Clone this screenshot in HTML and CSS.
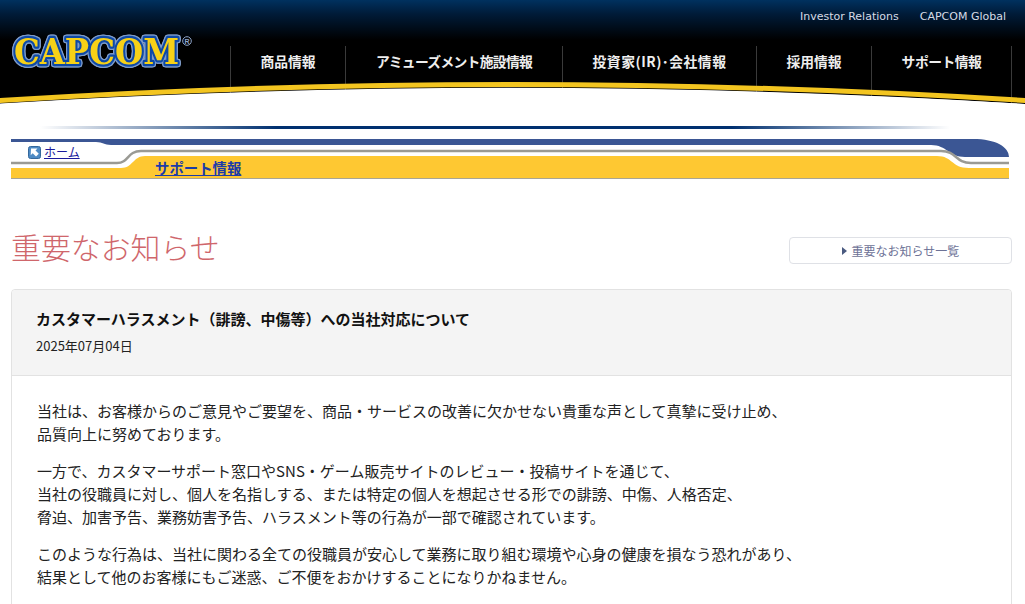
FILE: index.html
```html
<!DOCTYPE html>
<html lang="ja">
<head>
<meta charset="utf-8">
<title>重要なお知らせ | CAPCOM</title>
<link rel="stylesheet" href="styles.css">
</head>
<body>
<header class="site-header">
  <ul class="util-nav">
    <li><a href="#">Investor Relations</a></li>
    <li><a href="#">CAPCOM Global</a></li>
  </ul>
  <div class="main-row">
    <a class="logo" href="#" aria-label="CAPCOM">
      <svg width="190" height="50" viewBox="0 0 190 50">
        <text class="logo-text" x="8" y="36" textLength="165" lengthAdjust="spacingAndGlyphs">CAPCOM</text>
        <circle class="logo-reg-ring" cx="181" cy="13" r="4.300"/>
        <text class="logo-reg" x="181" y="15.500">R</text>
      </svg>
    </a>
    <nav class="main-nav">
      <a href="#">商品情報</a>
      <a class="amuse" href="#">アミューズメント施設情報</a>
      <a class="ir" href="#">投資家(IR)･会社情報</a>
      <a href="#">採用情報</a>
      <a class="last" href="#">サポート情報</a>
    </nav>
  </div>
  <svg class="swoosh" width="1025" height="30" viewBox="0 0 1025 30" aria-hidden="true">
    <path class="sw-shadow" d="M0 24 Q510 -7 1025 24 V30 H0Z"/>
    <path class="sw-white" d="M0 23.500 Q510 -8 1025 24 V30 H0 Z"/>
    <path class="sw-yellow" d="M0 18 Q510 -14 1025 18 V23 Q510 -9 0 23Z"/>
  </svg>
</header>

<div class="rule"></div>

<div class="band">
  <svg class="band-art" width="998" height="41" viewBox="0 0 998 41" aria-hidden="true">
    <path class="b-blue" d="M0 0 H962 C985 0 998 8 998 18 H954 C938 18 936 6 920 6 H100 C93 6 92 3 85 3 H0Z"/>
    <path class="b-yellow" d="M0 29 H110 C122 29 122 17 134 17 H926 C942 17 940 29 958 29 H998 V39 H0Z"/>
    <path class="b-gray" d="M0 24 H106 C118 24 116 12 130 12 H930 C946 12 944 24 960 24 H998" />
    <path class="b-base" d="M0 39.500 H998"/>
  </svg>
  <div class="band-home">
    <svg width="13" height="13" viewBox="0 0 13 13" aria-hidden="true">
      <rect class="home-box" x="0.500" y="0.500" width="12" height="12" rx="2"/>
      <path class="home-arrow" d="M3 2.500 H9.500 L7.500 4.500 L10.800 7.800 L8 10.600 L4.700 7.300 L2.700 9.300Z"/>
    </svg>
    <a href="#">ホーム</a>
  </div>
  <a class="band-title" href="#">サポート情報</a>
</div>

<main class="content">
  <div class="page-head">
    <h1>重要なお知らせ</h1>
    <a class="list-btn" href="#"><span class="tri"></span>重要なお知らせ一覧</a>
  </div>
  <article class="card">
    <div class="card-head">
      <h2>カスタマーハラスメント（誹謗、中傷等）への当社対応について</h2>
      <p class="date">2025年07月04日</p>
    </div>
    <div class="card-body">
      <p>当社は、お客様からのご意見やご要望を、商品・サービスの改善に欠かせない貴重な声として真摯に受け止め、<br>品質向上に努めております。</p>
      <p>一方で、カスタマーサポート窓口やSNS・ゲーム販売サイトのレビュー・投稿サイトを通じて、<br>当社の役職員に対し、個人を名指しする、または特定の個人を想起させる形での誹謗、中傷、人格否定、<br>脅迫、加害予告、業務妨害予告、ハラスメント等の行為が一部で確認されています。</p>
      <p>このような行為は、当社に関わる全ての役職員が安心して業務に取り組む環境や心身の健康を損なう恐れがあり、<br>結果として他のお客様にもご迷惑、ご不便をおかけすることになりかねません。</p>
    </div>
  </article>
</main>
</body>
</html>
```
FILE: styles.css
```css
* { box-sizing: border-box; }
html, body { margin: 0; padding: 0; background: #fff; overflow: hidden; height: 604px; }
body { font-family: "Noto Sans CJK JP", "Noto Sans", sans-serif; color: #222; width: 1025px; }
a { color: inherit; text-decoration: none; }
ul { list-style: none; margin: 0; padding: 0; }

.site-header {
  position: relative;
  height: 110px;
  background: linear-gradient(#00315f 0, #001b38 14px, #000 40px);
  display: flex;
  flex-direction: column;
}
.util-nav {
  display: flex;
  justify-content: flex-end;
  gap: 21px;
  padding: 9px 19px 0 0;
  height: 46px;
  font: 11px/15px "DejaVu Sans", sans-serif;
  color: #d5dbe6;
}
.main-row { display: flex; justify-content: space-between; flex: 1; }
.logo { margin: -18px 0 0 6px; height: 50px; }
.logo svg { display: block; }
.logo-text {
  font: 700 35px "DejaVu Serif", serif;
  fill: #f7d117;
  stroke: #0e49a6;
  stroke-width: 4.5px;
  stroke-linejoin: round;
  paint-order: stroke;
  filter: drop-shadow(1px 0 0 #7f9cc9) drop-shadow(-1px 0 0 #7f9cc9) drop-shadow(0 1px 0 #7f9cc9) drop-shadow(0 -1px 0 #7f9cc9);
}
.logo-reg-ring { fill: none; stroke: #8fa6cc; stroke-width: 1; }
.logo-reg { font: 700 7px "Liberation Sans", sans-serif; fill: #8fa6cc; text-anchor: middle; }
.main-nav {
  display: grid;
  grid-template-columns: 115px 217px 194px 115px 141px;
  margin-right: 13px;
}
.main-nav a {
  border-left: 1px solid #3a3a3a;
  padding-top: 5px;
  font-size: 13.8px;
  line-height: 20px;
  font-weight: 700;
  color: #eee;
  text-align: center;
  white-space: nowrap;
}
.main-nav a.amuse { letter-spacing: -0.7px; }
.main-nav a.ir { letter-spacing: 0.5px; }
.main-nav a.last { border-right: 1px solid #3a3a3a; letter-spacing: -0.5px; }
.swoosh { position: absolute; left: 0; top: 80px; }
.sw-white { fill: #fff; }
.sw-shadow { fill: #e6e4dc; }
.sw-yellow { fill: #f3c520; }

.rule {
  height: 3px;
  margin: 16px 75px 0 40px;
  background: linear-gradient(90deg, rgba(0,48,112,0) 0, #003070 26%, #003070 76%, rgba(0,48,112,0) 100%);
}
.band {
  position: relative;
  height: 41px;
  margin: 10px 0 0 11px;
  width: 998px;
}
.band-art { position: absolute; left: 0; top: 0; }
.b-blue { fill: #3b5694; }
.b-yellow { fill: #fec832; }
.b-gray { fill: none; stroke: #9a9a94; stroke-width: 2.5; }
.b-base { stroke: #a9a593; stroke-width: 1; }
.band-home {
  position: absolute;
  left: 17px;
  top: 6px;
  display: flex;
  align-items: center;
  gap: 3px;
  font-size: 12px;
  line-height: 14px;
}
.band-home a { color: #1a1a9c; text-decoration: underline; }
.home-box { fill: #4d8ac4; stroke: #35689c; }
.home-arrow { fill: #fff; }
.band-title {
  position: absolute;
  left: 144px;
  top: 19px;
  font-size: 14.4px;
  line-height: 19px;
  font-weight: 700;
  color: #1c3ba8;
  text-decoration: underline;
}

.content { padding: 0 13px 0 11px; }
.page-head {
  display: flex;
  justify-content: space-between;
  align-items: flex-start;
  margin-top: 47px;
  height: 62px;
}
.page-head h1 {
  margin: -3px 0 0;
  font-size: 29.9px;
  line-height: 44px;
  font-weight: 300;
  color: #cf666b;
  white-space: nowrap;
}
.list-btn {
  display: flex;
  align-items: center;
  justify-content: center;
  width: 223px;
  height: 27px;
  margin-top: 10px;
  border: 1px solid #dfe1e6;
  border-radius: 4px;
  font-size: 12px;
  color: #6d7296;
}
.tri {
  width: 0;
  height: 0;
  margin-right: 5px;
  border-left: 5px solid #4a5a80;
  border-top: 4px solid transparent;
  border-bottom: 4px solid transparent;
}
.card {
  border: 1px solid #e2e2e2;
  border-radius: 4px;
  height: 400px;
}
.card-head {
  height: 86px;
  padding: 17px 24px 0;
  background: #f4f4f4;
  border-bottom: 1px solid #e2e2e2;
  border-radius: 4px 4px 0 0;
}
.card-head h2 {
  margin: 0;
  font-size: 15px;
  line-height: 24px;
  font-weight: 700;
  color: #111;
}
.date { margin: 5px 0 0; font-size: 13px; line-height: 20px; color: #222; }
.card-body { padding: 23px 25px 0; }
.card-body p {
  margin: 0 0 14px;
  font-size: 15px;
  line-height: 23px;
  color: #222;
  white-space: nowrap;
}
```
